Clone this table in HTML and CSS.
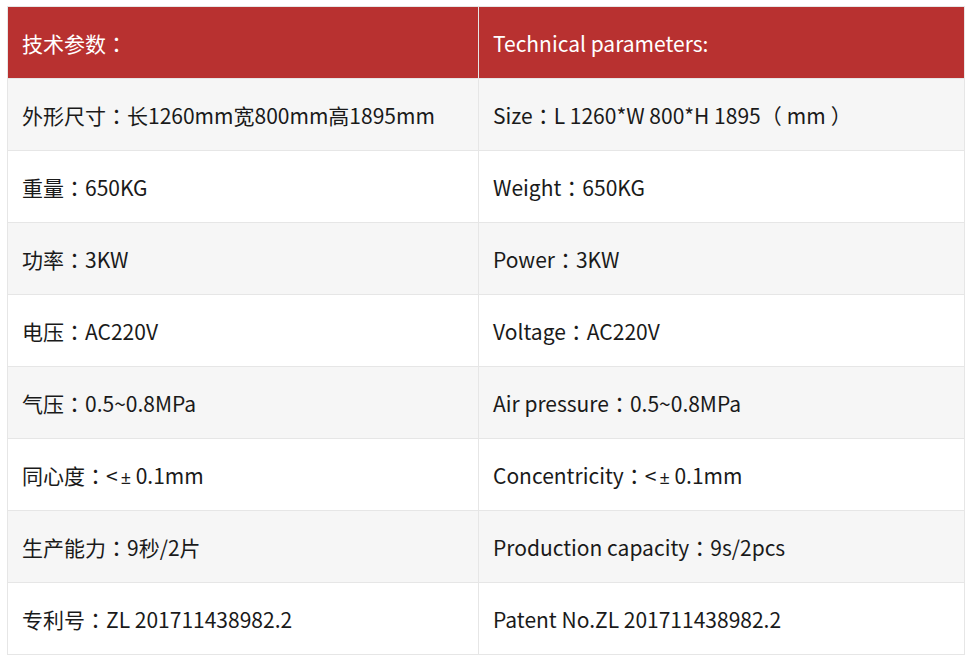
FILE: index.html
```html
<!DOCTYPE html>
<html lang="zh-CN">
<head>
<meta charset="utf-8">
<title>技术参数</title>
<link rel="stylesheet" href="styles.css">
</head>
<body>
<table class="spec">
  <thead>
    <tr><th class="c1">技术参数<span class="p" lang="zh-TW">：</span></th><th class="c2">Technical parameters:</th></tr>
  </thead>
  <tbody>
    <tr><td>外形尺寸<span class="p" lang="zh-TW">：</span>长1260mm宽800mm高1895mm</td><td>Size<span class="p" lang="zh-TW">：</span>L 1260*W 800*H 1895<span class="po">（</span>mm<span class="pc">）</span></td></tr>
    <tr><td>重量<span class="p" lang="zh-TW">：</span>650KG</td><td>Weight<span class="p" lang="zh-TW">：</span>650KG</td></tr>
    <tr><td>功率<span class="p" lang="zh-TW">：</span>3KW</td><td>Power<span class="p" lang="zh-TW">：</span>3KW</td></tr>
    <tr><td>电压<span class="p" lang="zh-TW">：</span>AC220V</td><td>Voltage<span class="p" lang="zh-TW">：</span>AC220V</td></tr>
    <tr><td>气压<span class="p" lang="zh-TW">：</span>0.5~0.8MPa</td><td>Air pressure<span class="p" lang="zh-TW">：</span>0.5~0.8MPa</td></tr>
    <tr><td>同心度<span class="p" lang="zh-TW">：</span>&lt;<span class="l">±</span> 0.1mm</td><td>Concentricity<span class="p" lang="zh-TW">：</span>&lt;<span class="l">±</span> 0.1mm</td></tr>
    <tr><td>生产能力<span class="p" lang="zh-TW">：</span>9秒/2片</td><td>Production capacity<span class="p" lang="zh-TW">：</span>9s/2pcs</td></tr>
    <tr><td>专利号<span class="p" lang="zh-TW">：</span>ZL 201711438982.2</td><td>Patent No.ZL 201711438982.2</td></tr>
  </tbody>
</table>
</body>
</html>
```
FILE: styles.css
```css
html, body {
  margin: 0;
  padding: 0;
  background: #fff;
}
body {
  padding: 6px 0 0 7px;
  font-family: "Noto Sans CJK SC", "Noto Sans", sans-serif;
  font-size: 21px;
  color: #1a1a1a;
}
.spec {
  border-collapse: collapse;
  width: 958px;
  table-layout: fixed;
}
.spec th, .spec td {
  border: 1px solid #e6e6e6;
  height: 71px;
  padding: 0 14px;
  text-align: left;
  font-weight: normal;
  vertical-align: middle;
  white-space: nowrap;
}
.spec .c1 { width: 442px; }
.spec thead th {
  background: #b83130;
  color: #fff;
}
.spec tbody tr:nth-child(odd) td {
  background: #f6f6f6;
}
.p {
  font-family: "Noto Sans CJK TC", sans-serif;
}
.po {
  padding-right: 5px;
}
.pc {
  padding-left: 5px;
}
.l {
  font-family: "Noto Sans", sans-serif;
  font-size: 18px;
  margin-left: 3px;
}
```
